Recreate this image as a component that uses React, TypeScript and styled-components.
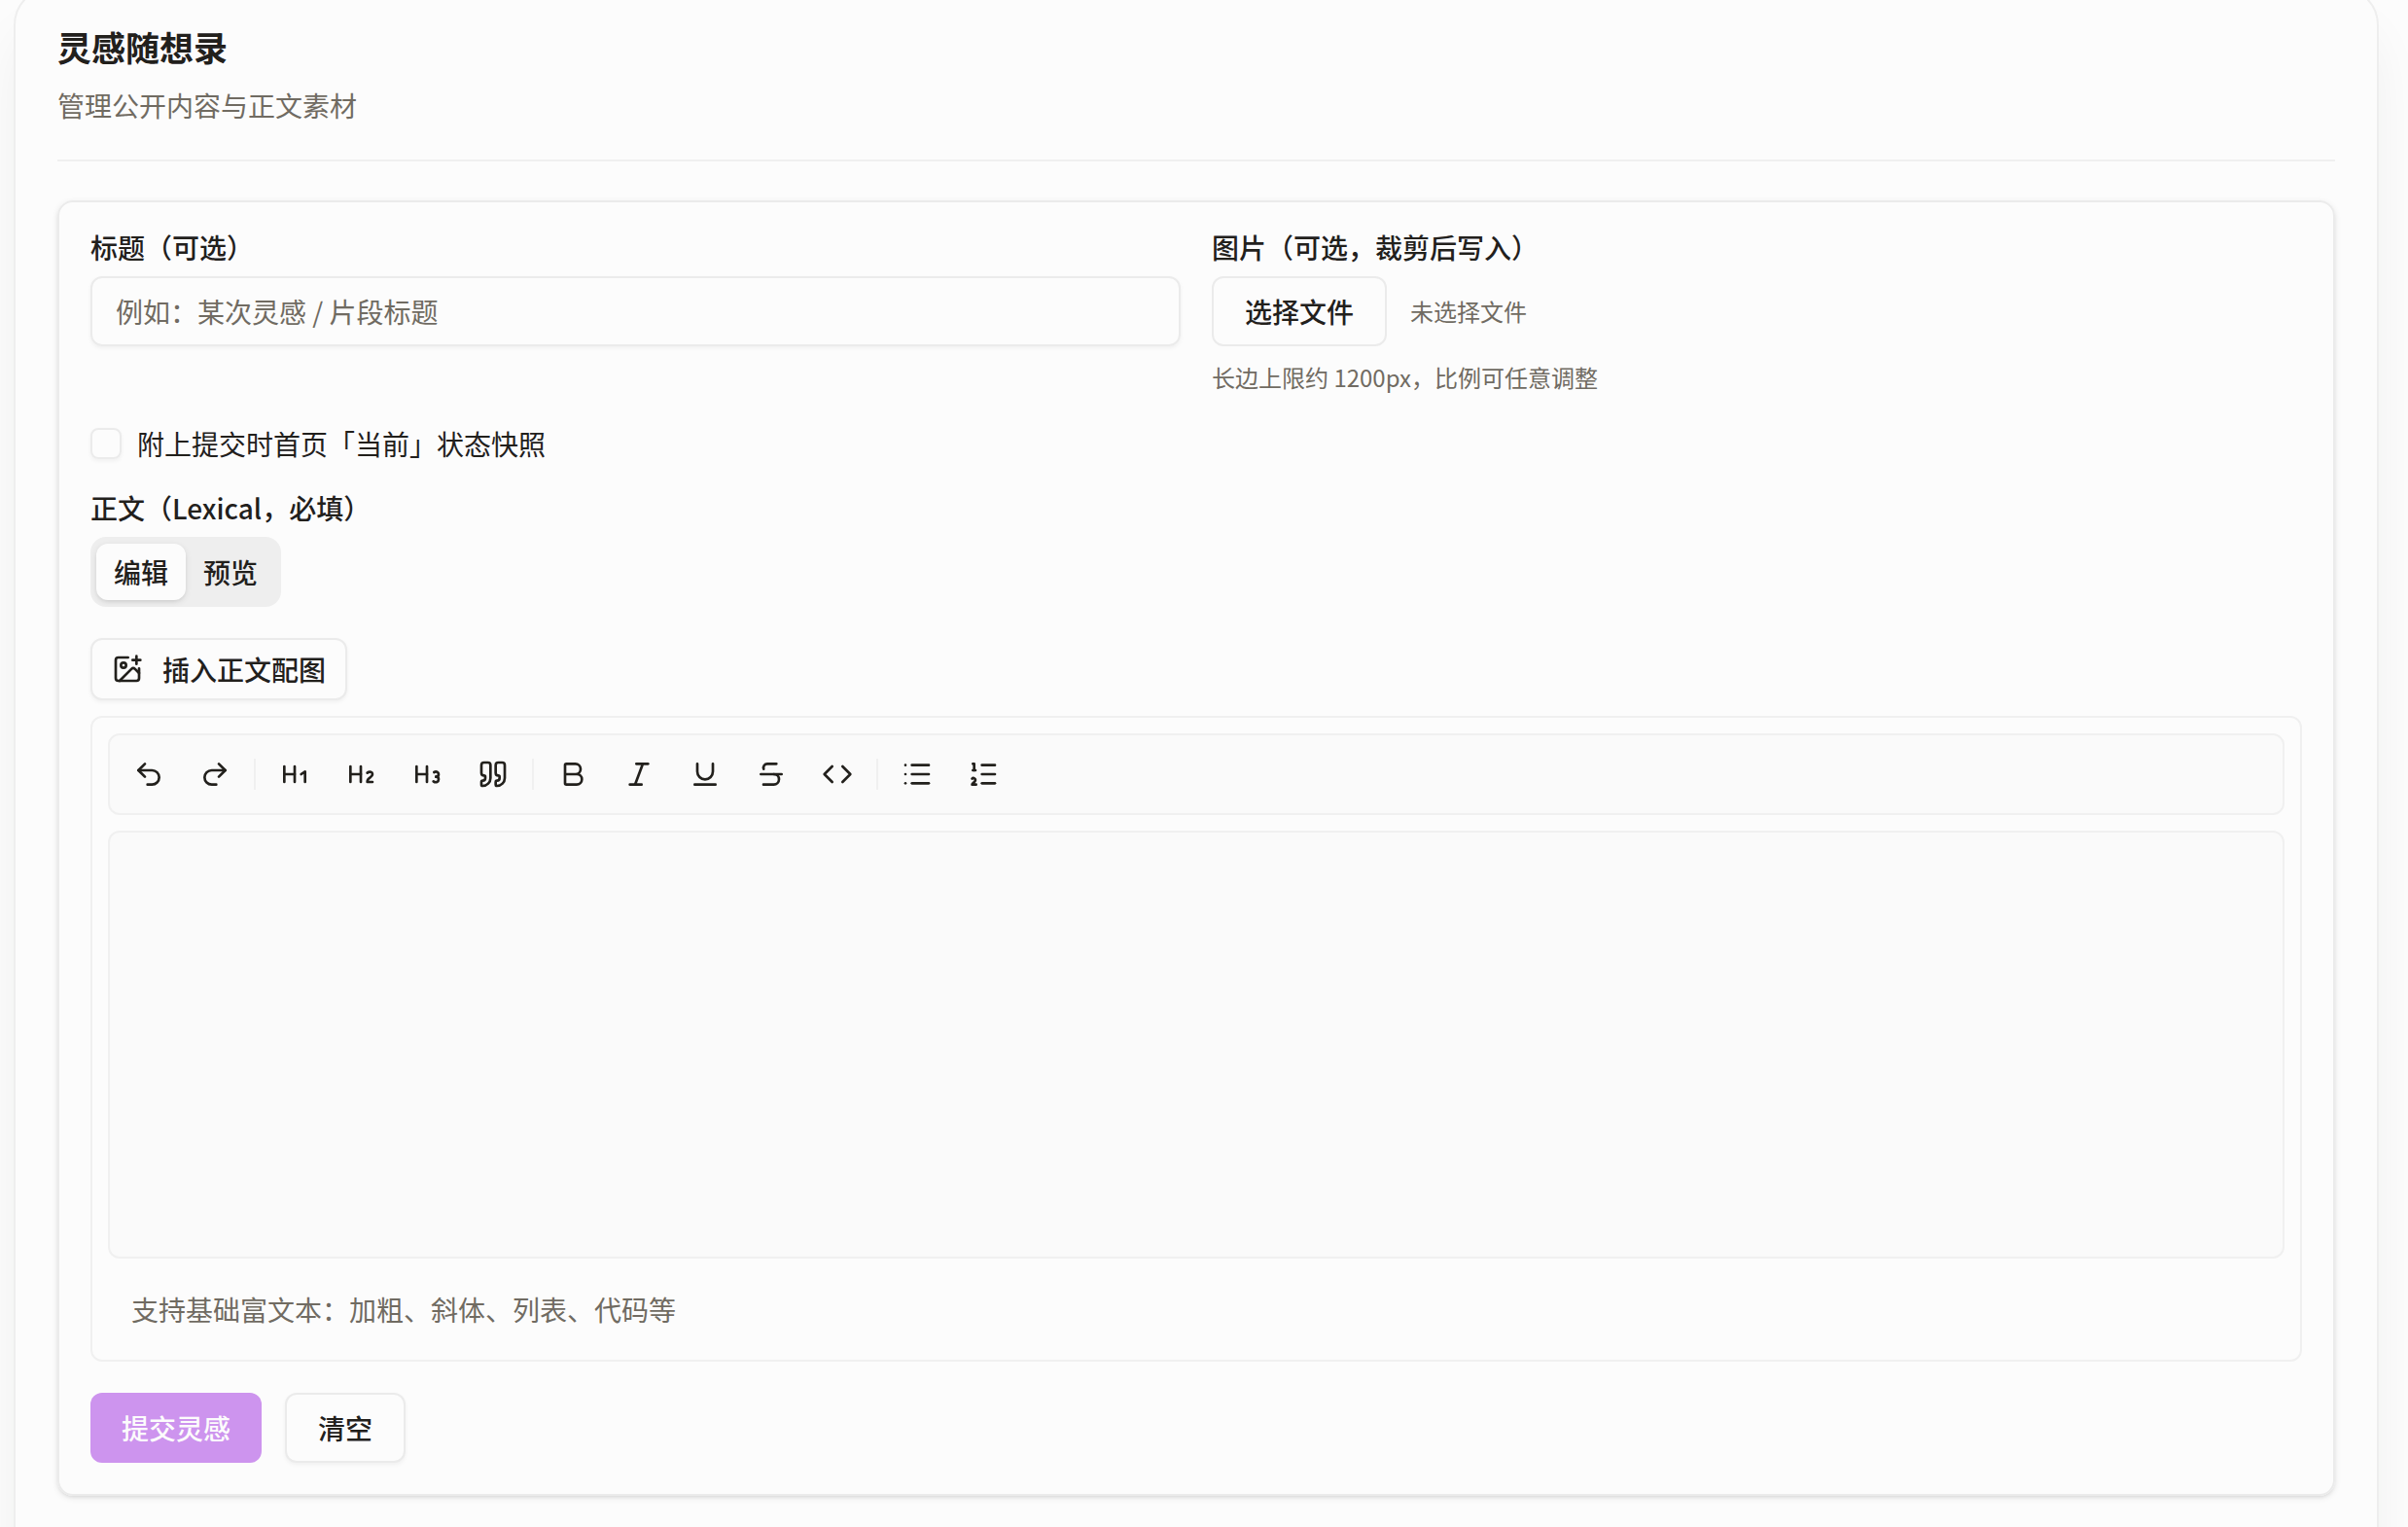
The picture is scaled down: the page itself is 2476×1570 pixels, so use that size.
import React, { useRef, useState } from "react";
import styled, { createGlobalStyle, css } from "styled-components";
import {
  Bold,
  Code,
  Heading1,
  Heading2,
  Heading3,
  ImagePlus,
  Italic,
  List,
  ListOrdered,
  Quote,
  Redo2,
  Strikethrough,
  Underline,
  Undo2,
} from "lucide-react";

const color = {
  page: "#fcfcfc",
  sunken: "#fafafa",
  border: "#ebebeb",
  borderSoft: "#f0f0f0",
  muted: "#eeeeee",
  text: "#22201c",
  textMuted: "#706b62",
  primary: "#cd94ee",
};

const GlobalStyle = createGlobalStyle`
  * { box-sizing: border-box; }
  body {
    margin: 0;
    background: ${color.page};
    color: ${color.text};
    font-family: "Noto Sans CJK SC", "Noto Sans", sans-serif;
    font-size: 28px;
    line-height: 40px;
    overflow: hidden;
  }
  button, input, textarea { font: inherit; color: inherit; }
`;

const Panel = styled.main`
  margin: -14px 30px 0 14px;
  min-height: calc(100vh + 80px);
  padding: 40px 43px 44px;
  border: 2px solid #eeeeee;
  border-radius: 40px;
  background: ${color.page};
  box-shadow: 0 40px 60px -10px rgba(10, 40, 30, 0.07);
`;

const Header = styled.header`
  display: flex;
  flex-direction: column;
  gap: 20px;
  padding-bottom: 36px;
  border-bottom: 2px solid ${color.borderSoft};
  margin-bottom: 40px;
`;

const Title = styled.h1`
  margin: 0;
  font-size: 35px;
  line-height: 40px;
  font-weight: 700;
`;

const Subtitle = styled.p`
  margin: 0;
  color: ${color.textMuted};
`;

const Form = styled.form`
  display: flex;
  flex-direction: column;
  gap: 32px;
  padding: 32px;
  border: 2px solid ${color.border};
  border-radius: 16px;
  box-shadow: 0 2px 6px rgba(0, 0, 0, 0.1), 0 2px 4px -2px rgba(0, 0, 0, 0.1);
`;

const Columns = styled.div`
  display: grid;
  grid-template-columns: 1fr 1fr;
  gap: 32px;
`;

const Stack = styled.div`
  display: flex;
  flex-direction: column;
  align-items: stretch;
  gap: 16px;
`;

const Label = styled.label`
  line-height: 28px;
  font-weight: 500;
`;

const TextInput = styled.input`
  width: 100%;
  height: 72px;
  padding: 0 24px;
  border: 2px solid ${color.border};
  border-radius: 12px;
  background: transparent;
  box-shadow: 0 2px 4px rgba(0, 0, 0, 0.05);
  &::placeholder {
    color: ${color.textMuted};
    opacity: 1;
  }
`;

const Row = styled.div<{ $gap: number }>`
  display: flex;
  align-items: center;
  gap: ${(p) => p.$gap}px;
`;

const Button = styled.button<{ $variant?: "primary" | "outline"; $size?: "small" | "default" }>`
  display: inline-flex;
  align-items: center;
  gap: 20px;
  height: 72px;
  padding: 0 32px;
  border: 0;
  border-radius: 12px;
  font-weight: 500;
  white-space: nowrap;
  cursor: pointer;
  ${(p) =>
    p.$variant === "primary"
      ? css`
          background: ${color.primary};
          color: ${color.page};
        `
      : css`
          border: 2px solid ${color.border};
          background: ${color.page};
          box-shadow: 0 2px 4px rgba(0, 0, 0, 0.05);
        `}
  ${(p) =>
    p.$size === "small" &&
    css`
      height: 64px;
      padding: 0 20px;
      align-self: flex-start;
    `}
`;

const FileButton = styled(Button)`
  box-shadow: none;
`;

const Note = styled.span`
  font-size: 24px;
  line-height: 32px;
  color: ${color.textMuted};
`;

const Checkbox = styled.input`
  appearance: none;
  width: 32px;
  height: 32px;
  margin: 0;
  border: 2px solid ${color.border};
  border-radius: 8px;
  box-shadow: 0 2px 4px rgba(0, 0, 0, 0.05);
  &:checked {
    background: ${color.primary};
  }
`;

const TabList = styled.div`
  display: flex;
  align-items: center;
  align-self: flex-start;
  height: 72px;
  padding: 0 6px;
  border-radius: 16px;
  background: ${color.muted};
`;

const Tab = styled.button<{ $active: boolean }>`
  height: 58px;
  padding: 0 16px;
  border: 2px solid transparent;
  border-radius: 12px;
  background: transparent;
  font-weight: 500;
  cursor: pointer;
  ${(p) =>
    p.$active &&
    css`
      border-color: ${color.page};
      background: ${color.page};
      box-shadow: 0 2px 6px rgba(0, 0, 0, 0.1), 0 2px 4px -2px rgba(0, 0, 0, 0.1);
    `}
`;

const Editor = styled.div`
  display: flex;
  flex-direction: column;
  gap: 16px;
  padding: 16px;
  border: 2px solid ${color.borderSoft};
  border-radius: 12px;
`;

const Toolbar = styled.div`
  display: flex;
  align-items: center;
  gap: 4px;
  padding: 8px;
  border: 2px solid ${color.borderSoft};
  border-radius: 12px;
  background: ${color.sunken};
`;

const ToolButton = styled.button`
  display: grid;
  place-items: center;
  width: 64px;
  height: 64px;
  padding: 0;
  border: 0;
  border-radius: 8px;
  background: transparent;
  cursor: pointer;
`;

const Divider = styled.span`
  width: 2px;
  height: 32px;
  margin: 0 4px;
  background: ${color.borderSoft};
`;

const Canvas = styled.textarea`
  display: block;
  width: 100%;
  height: 440px;
  padding: 24px;
  border: 2px solid ${color.borderSoft};
  border-radius: 12px;
  background: ${color.sunken};
  resize: none;
`;

const EditorHint = styled.p`
  margin: 0;
  padding: 16px 24px;
  color: ${color.textMuted};
`;

const tools = [
  [
    { name: "撤销", Icon: Undo2 },
    { name: "重做", Icon: Redo2 },
  ],
  [
    { name: "一级标题", Icon: Heading1 },
    { name: "二级标题", Icon: Heading2 },
    { name: "三级标题", Icon: Heading3 },
    { name: "引用", Icon: Quote },
  ],
  [
    { name: "加粗", Icon: Bold },
    { name: "斜体", Icon: Italic },
    { name: "下划线", Icon: Underline },
    { name: "删除线", Icon: Strikethrough },
    { name: "代码", Icon: Code },
  ],
  [
    { name: "无序列表", Icon: List },
    { name: "有序列表", Icon: ListOrdered },
  ],
];

export default function App() {
  const fileInput = useRef<HTMLInputElement>(null);
  const [fileName, setFileName] = useState("");
  const [tab, setTab] = useState("编辑");

  return (
    <>
      <GlobalStyle />
      <Panel>
        <Header>
          <Title>灵感随想录</Title>
          <Subtitle>管理公开内容与正文素材</Subtitle>
        </Header>
        <Form onSubmit={(e) => e.preventDefault()}>
          <Columns>
            <Stack>
              <Label htmlFor="title">标题（可选）</Label>
              <TextInput id="title" placeholder="例如：某次灵感 / 片段标题" />
            </Stack>
            <Stack>
              <Label htmlFor="picture">图片（可选，裁剪后写入）</Label>
              <Row $gap={24}>
                <FileButton type="button" onClick={() => fileInput.current?.click()}>
                  选择文件
                </FileButton>
                <Note>{fileName || "未选择文件"}</Note>
                <input
                  id="picture"
                  ref={fileInput}
                  type="file"
                  accept="image/*"
                  hidden
                  onChange={(e) => setFileName(e.target.files?.[0]?.name ?? "")}
                />
              </Row>
              <Note>长边上限约 1200px，比例可任意调整</Note>
            </Stack>
          </Columns>
          <Row $gap={16}>
            <Checkbox id="snapshot" type="checkbox" />
            <label htmlFor="snapshot">附上提交时首页「当前」状态快照</label>
          </Row>
          <Stack>
            <Label htmlFor="body">正文（Lexical，必填）</Label>
            <TabList role="tablist">
              {["编辑", "预览"].map((name) => (
                <Tab
                  key={name}
                  type="button"
                  role="tab"
                  aria-selected={tab === name}
                  $active={tab === name}
                  onClick={() => setTab(name)}
                >
                  {name}
                </Tab>
              ))}
            </TabList>
          </Stack>
          <Stack>
            <Button type="button" $size="small">
              <ImagePlus size={32} />
              插入正文配图
            </Button>
            <Editor>
              <Toolbar role="toolbar">
                {tools.map((group, i) => (
                  <React.Fragment key={i}>
                    {i > 0 && <Divider />}
                    {group.map(({ name, Icon }) => (
                      <ToolButton key={name} type="button" aria-label={name}>
                        <Icon size={32} />
                      </ToolButton>
                    ))}
                  </React.Fragment>
                ))}
              </Toolbar>
              <Canvas id="body" />
              <EditorHint>支持基础富文本：加粗、斜体、列表、代码等</EditorHint>
            </Editor>
          </Stack>
          <Row $gap={24}>
            <Button type="submit" $variant="primary">
              提交灵感
            </Button>
            <Button type="reset">清空</Button>
          </Row>
        </Form>
      </Panel>
    </>
  );
}
